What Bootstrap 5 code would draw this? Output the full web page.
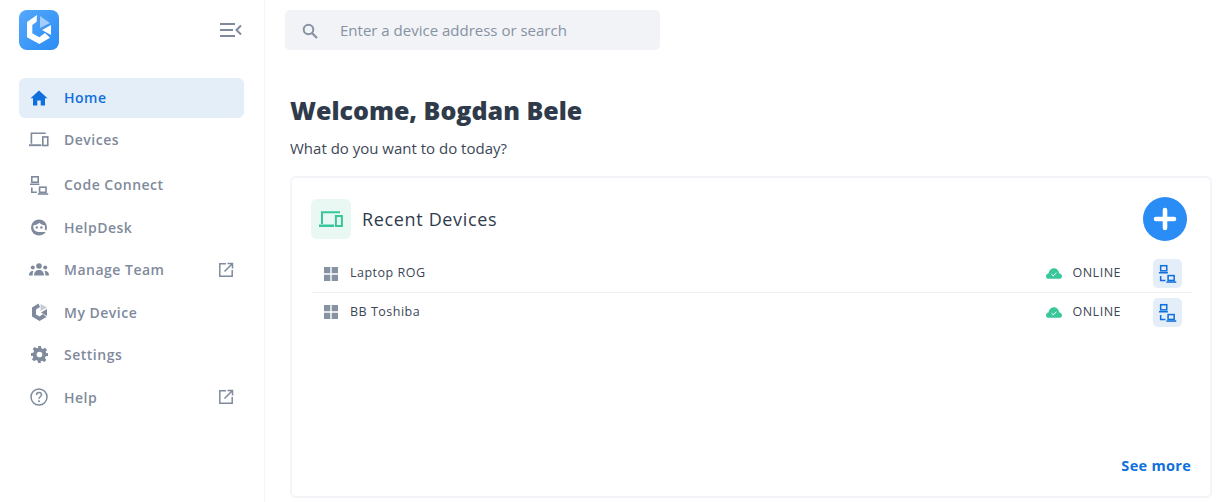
<!DOCTYPE html>
<html lang="en">
<head>
<meta charset="utf-8">
<title>Home</title>
<link rel="stylesheet" href="https://cdn.jsdelivr.net/npm/bootstrap@5.3.0/dist/css/bootstrap.min.css">
<style>
html,body{height:502px;overflow:hidden;background:#fff}
body{font-family:"Open Sans","Liberation Sans",sans-serif;color:#2f3b4b}
.side{width:265px;height:502px;border-right:1.5px solid #f3f4f8;padding:10px 20.500px 0 19px;flex:none}
.logo-row{height:40px;margin-bottom:28px;padding-right:2px}
.logo-box{width:40px;height:40px;border-radius:8px;background:linear-gradient(135deg,#55a8fb,#2a8cf5)}
.logo-box svg{display:block}
.nav-entry{height:40px;margin-bottom:2.5px;border-radius:6px;padding:0 10px 1px 10px;color:#7f8a9c;font-size:14px;font-weight:600;letter-spacing:.5px;text-decoration:none}
.nav-entry.on{background:#e4eef9;color:#0f6fdc;margin-bottom:2px}
.nav-entry.extra{margin-bottom:5px}
.ico-slot{width:20px;height:20px;margin-right:15px;flex:none}
.ext{margin-left:auto}
.pane{padding:10px 4px 5px 20px;min-width:0}
.seek{width:375px;height:40px;background:#f1f3f7;border-radius:5px;padding:1px 0 0 17px;color:#8792a3;font-size:15px}
.seek svg{margin-right:22px}
.hello{margin:44px 0 0 5px;font-size:25px;line-height:32px;font-weight:800;color:#2f3b4b}
.sub{margin:12px 0 0 5px;font-size:15px;line-height:20px;color:#3d4856}
.panel{margin:18px 0 0 5px;height:322px;border:2px solid #f3f4f8;border-radius:6px;padding:19px 18px 0 20px;position:relative}
.head-ico{width:40px;height:40px;border-radius:6px;background:#e9f8f3;margin:0 11px 0 -1px}
.head-txt{font-size:18px;letter-spacing:.65px;color:#2f3b4b;font-weight:400}
.plus{width:44px;height:44px;border-radius:50%;background:#2a8cf5;border:0;padding:0;margin:0 5px 0 0}
.dev-list{margin-top:14px}
.dev{height:38px;border-bottom:1px solid #eef0f5;padding:0 10px 0 12px;font-size:12.5px;letter-spacing:.5px;color:#3b4656}
.dev:last-child{border-bottom:0}
.dev-name{margin-left:12px}
.stat{margin-left:auto;margin-right:32px}
.stat span{margin-left:10px}
.act{width:29px;height:29px;border-radius:5px;background:#e4eef9;border:0;padding:0}
.more{position:absolute;right:19px;bottom:19px;font-size:14.5px;font-weight:700;letter-spacing:.3px;color:#0f6fdc;text-decoration:none}
</style>
</head>
<body>
<svg width="0" height="0" class="d-block position-absolute">
<defs>
<symbol id="i-pair" viewBox="0 0 20 20"><g fill="none" stroke="currentColor" stroke-width="1.600"><rect x="2.800" y="1.800" width="6.400" height="5.400"/><path d="M1 9.200h9.400M2.800 12.500v4.800h5"/><rect x="10.600" y="12.200" width="6.400" height="5.100"/><path d="M8.800 19h10.400"/></g></symbol>
<symbol id="i-out" viewBox="0 0 16 16"><g fill="none" stroke="currentColor" stroke-width="1.500"><path d="M8 1.800H1.800v12.400h12.400V8"/><path d="M6.500 9.500 14 2M9.500 1.500h5v5" /></g></symbol>
</defs>
</svg>
<div class="d-flex">
<aside class="side">
  <div class="logo-row d-flex align-items-center justify-content-between">
    <div class="logo-box">
      <svg width="40" height="40" viewBox="0 0 40 40"><path d="M18 5 8 12v15.300L20.300 34 31 27.700 26 23l-5.700 4.300-7-4V15L17.700 11.700z" fill="#fff"/><path d="M21 6 31 13 21 18z" fill="#a5cdfb"/><path d="M23 20 32 15v10z" fill="#fff"/></svg>
    </div>
    <svg width="22" height="16" viewBox="0 0 22 16"><g fill="none" stroke="#7f8a9c" stroke-width="2"><path d="M0 2h15M0 8h13M0 14h15"/><path d="M21 3.500 16.500 8l4.500 4.500"/></g></svg>
  </div>
  <nav class="d-flex flex-column">
    <a class="nav-entry on d-flex align-items-center" href="#"><span class="ico-slot d-flex align-items-center justify-content-center"><svg width="18" height="16" viewBox="0 0 18 16"><path d="M9 .5 .5 8.200h2.500V15.500h4.300V10.500h3.400v5h4.300V8.200h2.500z" fill="#0f6fdc"/></svg></span>Home</a>
    <a class="nav-entry extra d-flex align-items-center" href="#"><span class="ico-slot d-flex align-items-center justify-content-center"><svg width="21" height="15" viewBox="0 0 21 15"><g fill="none" stroke="#7f8a9c" stroke-width="1.700"><path d="M2.500 12V1h15"/><rect x="14.500" y="4.800" width="5.200" height="9"/></g><path d="M0 12.500h13v2H0z" fill="#7f8a9c"/></svg></span>Devices</a>
    <a class="nav-entry d-flex align-items-center" href="#"><span class="ico-slot d-flex align-items-center justify-content-center"><svg width="20" height="20" style="color:#7f8a9c"><use href="#i-pair"/></svg></span>Code Connect</a>
    <a class="nav-entry d-flex align-items-center" href="#"><span class="ico-slot d-flex align-items-center justify-content-center"><svg width="18" height="17" viewBox="0 0 18 17"><circle cx="9" cy="8.500" r="8" fill="#7f8a9c"/><path d="M3.500 6.200C6 6.200 8 5.400 9.500 3.800c1.200 1.500 2.900 2.300 5 2.400 .8 1 .8 3 .1 4.100L17 12v1H8.500C5 12.500 2.500 10 3.500 6.200z" fill="#fff"/><circle cx="6.800" cy="8.400" r="1.200" fill="#7f8a9c"/><circle cx="11.400" cy="8.400" r="1.200" fill="#7f8a9c"/></svg></span>HelpDesk</a>
    <a class="nav-entry d-flex align-items-center" href="#"><span class="ico-slot d-flex align-items-center justify-content-center"><svg width="20" height="13" viewBox="0 0 20 13" fill="#7f8a9c"><circle cx="10" cy="3" r="2.800"/><circle cx="3.800" cy="4.500" r="2"/><circle cx="16.200" cy="4.500" r="2"/><path d="M5 12.500c0-3.500 2-5.500 5-5.500s5 2 5 5.500z"/><path d="M0 12.500c0-3 1.300-4.500 3.800-4.500l.7.100C3.800 9.300 3.700 11 3.700 12.500zM20 12.500c0-3-1.300-4.500-3.800-4.500l-.7.100c.7 1.200.8 2.900.8 4.400z"/></svg></span>Manage Team<svg class="ext" width="16" height="16" style="color:#7f8a9c"><use href="#i-out"/></svg></a>
    <a class="nav-entry d-flex align-items-center" href="#"><span class="ico-slot d-flex align-items-center justify-content-center"><svg width="17" height="18" viewBox="0 0 17 18"><path d="M7.500.5 1 4.500v9L8.500 18l7-4-3.500-3-3.500 2.500-3.500-2V6.500L9 4z" fill="#7f8a9c"/><path d="M9.500 1v7l6.500-3.500z" fill="#c5cbd4"/><path d="M10 9.500 16 6v7z" fill="#7f8a9c"/></svg></span>My Device</a>
    <a class="nav-entry d-flex align-items-center" href="#"><span class="ico-slot d-flex align-items-center justify-content-center"><svg width="17" height="17" viewBox="0 0 24 24"><path fill="#7f8a9c" fill-rule="evenodd" d="M10 0h4l.6 3.300 2.300 1 2.800-1.900 2.900 2.900-1.900 2.800 1 2.300L24 10v4l-3.300.6-1 2.300 1.900 2.800-2.900 2.900-2.800-1.900-2.300 1L13.900 24H10l-.6-3.300-2.300-1-2.800 1.900-2.900-2.900 1.900-2.800-1-2.300L0 14v-4l3.300-.6 1-2.300-1.900-2.800 2.900-2.900 2.800 1.900 2.300-1zM12 8a4 4 0 1 0 0 8 4 4 0 0 0 0-8z"/></svg></span>Settings</a>
    <a class="nav-entry d-flex align-items-center" href="#"><span class="ico-slot d-flex align-items-center justify-content-center"><svg width="18" height="18" viewBox="0 0 18 18"><circle cx="9" cy="9" r="8" fill="none" stroke="#7f8a9c" stroke-width="1.500"/><path d="M6.500 7c0-1.500 1.100-2.400 2.500-2.400s2.500.9 2.500 2.200c0 1.900-2.500 2-2.500 4" fill="none" stroke="#7f8a9c" stroke-width="1.500"/><circle cx="9" cy="13.200" r="1" fill="#7f8a9c"/></svg></span>Help<svg class="ext" width="16" height="16" style="color:#7f8a9c"><use href="#i-out"/></svg></a>
  </nav>
</aside>
<main class="pane flex-grow-1">
  <div class="seek d-flex align-items-center">
    <svg width="16" height="16" viewBox="0 0 16 16"><circle cx="6.500" cy="6.500" r="4.800" fill="none" stroke="#8792a3" stroke-width="2"/><path d="m10 10 5 5" stroke="#8792a3" stroke-width="2.200"/></svg>
    <span>Enter a device address or search</span>
  </div>
  <h1 class="hello">Welcome, Bogdan Bele</h1>
  <p class="sub">What do you want to do today?</p>
  <section class="panel">
    <div class="d-flex align-items-center">
      <div class="head-ico d-flex align-items-center justify-content-center"><svg width="24" height="16" viewBox="0 0 24 16"><g fill="none" stroke="#37c79a" stroke-width="2"><path d="M3 13V1.200h18"/><rect x="16.900" y="5" width="6" height="10"/></g><path d="M0 13.500h15V16H0z" fill="#37c79a"/></svg></div>
      <div class="head-txt">Recent Devices</div>
      <button class="plus ms-auto d-flex align-items-center justify-content-center" aria-label="Add"><svg width="24" height="24" viewBox="0 0 24 24"><path d="M12 3v18M3 12h18" stroke="#fff" stroke-width="4.600" stroke-linecap="round"/></svg></button>
    </div>
    <div class="dev-list">
      <div class="dev d-flex align-items-center">
        <svg width="14" height="14" viewBox="0 0 14 14" fill="#8792a3"><path d="M0 0h6.300v6.300H0zM7.700 0H14v6.300H7.700zM0 7.700h6.300V14H0zM7.700 7.700H14V14H7.700z"/></svg>
        <span class="dev-name">Laptop ROG</span>
        <div class="stat d-flex align-items-center"><svg width="16" height="11" viewBox="0 0 16 11"><path d="M2.500 10.800C1 10.800 0 9.700 0 8.200c0-1.300 1-2.400 2.500-2.600C3 2.500 5.200.3 8 .3c2.700 0 4.700 2 5.300 5.100 1.500.3 2.700 1.400 2.700 2.800 0 1.500-1.200 2.600-2.700 2.600z" fill="#37c79a"/><path d="m5.500 6.200 1.800 1.700 3.200-3.200" fill="none" stroke="#fff" stroke-width="1"/></svg><span>ONLINE</span></div>
        <button class="act d-flex align-items-center justify-content-center" aria-label="Connect"><svg width="19" height="19" style="color:#0f6fdc"><use href="#i-pair"/></svg></button>
      </div>
      <div class="dev d-flex align-items-center">
        <svg width="14" height="14" viewBox="0 0 14 14" fill="#8792a3"><path d="M0 0h6.300v6.300H0zM7.700 0H14v6.300H7.700zM0 7.700h6.300V14H0zM7.700 7.700H14V14H7.700z"/></svg>
        <span class="dev-name">BB Toshiba</span>
        <div class="stat d-flex align-items-center"><svg width="16" height="11" viewBox="0 0 16 11"><path d="M2.500 10.800C1 10.800 0 9.700 0 8.200c0-1.300 1-2.400 2.500-2.600C3 2.500 5.200.3 8 .3c2.700 0 4.700 2 5.300 5.100 1.500.3 2.700 1.400 2.700 2.800 0 1.500-1.200 2.600-2.700 2.600z" fill="#37c79a"/><path d="m5.500 6.200 1.800 1.700 3.200-3.200" fill="none" stroke="#fff" stroke-width="1"/></svg><span>ONLINE</span></div>
        <button class="act d-flex align-items-center justify-content-center" aria-label="Connect"><svg width="19" height="19" style="color:#0f6fdc"><use href="#i-pair"/></svg></button>
      </div>
    </div>
    <a class="more" href="#">See more</a>
  </section>
</main>
</div>
<script src="https://cdn.jsdelivr.net/npm/bootstrap@5.3.0/dist/js/bootstrap.bundle.min.js"></script>
</body>
</html>
